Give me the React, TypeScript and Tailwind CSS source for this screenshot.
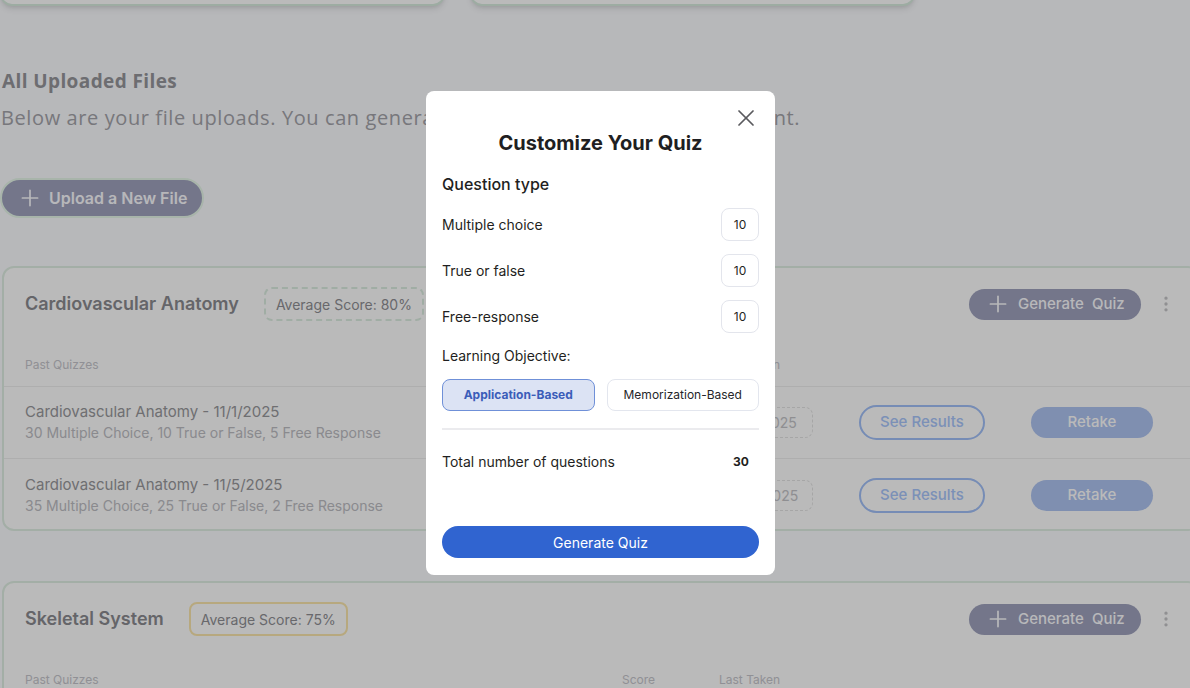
import { Plus, X, EllipsisVertical } from 'lucide-react';

interface PastQuiz {
  name: string;
  detail: string;
  score: string;
  date: string;
}

interface FileCardProps {
  title: string;
  average: string;
  badgeBorder: string;
  quizzes: PastQuiz[];
}

const FileCard = ({ title, average, badgeBorder, quizzes }: FileCardProps) => {
  return (
    <div className="ml-[2px] w-[1198px] rounded-xl border-2 border-[#e0efe4] bg-white">
      <div className="flex items-center pl-[21px] pr-[22px] pt-[19px]">
        <h3 className="text-[18px] font-semibold leading-7 text-[#8b8b90]">{title}</h3>
        <span
          className={`ml-[25px] flex h-[34px] items-center rounded-lg border-2 px-[10px] text-[14px] text-[#8f8f94] ${badgeBorder}`}
        >
          {average}
        </span>
        <button className="ml-auto flex h-[31px] w-[172px] items-center gap-[7px] whitespace-nowrap rounded-full bg-[#9fa2bd] pl-[16px] text-[15px] font-medium text-[#fcfcff]">
          <Plus size={26} strokeWidth={1.6} />
          <span>Generate&nbsp; Quiz</span>
        </button>
        <EllipsisVertical size={20} className="ml-[15px] text-[#c6c6c8]" />
      </div>

      <div className="mt-[36px] flex border-b border-[#efefef] pb-[13px] pl-[21px] text-[12px] leading-4 text-[#c6c6cc]">
        <span className="w-[597px]">Past Quizzes</span>
        <span className="w-[97px]">Score</span>
        <span>Last Taken</span>
      </div>

      {quizzes.map((q, i) => (
        <div
          key={q.name}
          className={`flex items-center pl-[21px] ${i === 0 ? 'h-[72px] border-b border-[#efefef]' : 'h-[70px] pt-[2px]'}`}
        >
          <div className="flex w-[597px] flex-col gap-[1px]">
            <span className="text-[15px] leading-5 text-[#98989c]">{q.name}</span>
            <span className="text-[14px] leading-5 text-[#bdbdc3]">{q.detail}</span>
          </div>
          <span className="w-[97px] text-[14px] text-[#98989c]">{q.score}</span>
          <div className="w-[140px]">
            <span className="flex h-[31px] w-[94px] items-center justify-center rounded-lg border border-dashed border-[#e4e4e4] text-[14px] text-[#c4c4c8]">
              {q.date}
            </span>
          </div>
          <div className="w-[172px]">
            <button className="h-[35px] w-[126px] rounded-full border-2 border-[#a2c0f8] text-[15px] font-medium text-[#a9c6fb]">
              See Results
            </button>
          </div>
          <button className="h-[31px] w-[122px] rounded-full bg-[#aec4f1] text-[15px] font-medium text-white">
            Retake
          </button>
        </div>
      ))}
    </div>
  );
};

const QuizModal = () => {
  const types = ['Multiple choice', 'True or false', 'Free-response'];

  return (
    <div className="absolute left-[426px] top-[91px] h-[484px] w-[349px] rounded-lg bg-white px-4 pt-4 font-['Inter',sans-serif] text-[#1f1f22]">
      <button className="absolute right-[15px] top-[13px] text-[#5a5a5e]">
        <X size={28} strokeWidth={1.5} />
      </button>

      <h2 className="mt-[22px] text-center text-[20px] font-bold leading-7">Customize Your Quiz</h2>
      <p className="mt-[15px] text-[16px] font-medium leading-6">Question type</p>

      <div className="mt-[12px] flex flex-col gap-[13px]">
        {types.map((t) => (
          <div key={t} className="flex items-center justify-between">
            <span className="text-[14px]">{t}</span>
            <span className="flex h-[33px] w-[38px] items-center justify-center rounded-lg border border-[#e3e5ec] text-[12px]">
              10
            </span>
          </div>
        ))}
      </div>

      <p className="mt-[13px] text-[14px] leading-5">Learning Objective:</p>
      <div className="mt-[13px] grid grid-cols-2 gap-3">
        <button className="h-[32px] rounded-lg border border-[#6f90d8] bg-[#dce3f4] text-[12px] font-bold text-[#3b5db9]">
          Application-Based
        </button>
        <button className="h-[32px] rounded-lg border border-[#e3e6ee] text-[12px] text-[#26262a]">
          Memorization-Based
        </button>
      </div>

      <div className="mt-[17px] h-[2px] bg-[#ebebee]" />

      <div className="mt-[22px] flex items-center justify-between text-[14px] leading-5">
        <span>Total number of questions</span>
        <span className="w-[36px] text-center text-[12px] font-bold">30</span>
      </div>

      <button className="mt-[54px] h-[32px] w-full rounded-full bg-[#3064d0] text-[14px] text-white">
        Generate Quiz
      </button>
    </div>
  );
};

const App = () => {
  const cardio: PastQuiz[] = [
    {
      name: 'Cardiovascular Anatomy - 11/1/2025',
      detail: '30 Multiple Choice, 10 True or False, 5 Free Response',
      score: '82%',
      date: '11/1/2025',
    },
    {
      name: 'Cardiovascular Anatomy - 11/5/2025',
      detail: '35 Multiple Choice, 25 True or False, 2 Free Response',
      score: '78%',
      date: '11/5/2025',
    },
  ];

  const skeletal: PastQuiz[] = [
    {
      name: 'Skeletal System - 10/28/2025',
      detail: '20 Multiple Choice, 10 True or False, 5 Free Response',
      score: '75%',
      date: '10/28/2025',
    },
  ];

  return (
    <div className="relative h-[688px] w-[1190px] overflow-hidden bg-[#fbfcff] font-['Inter',sans-serif]">
      <div className="w-[1200px]">
        {/* cards above, scrolled out of view */}
        <div className="-mt-[94px] flex gap-[25px]">
          <div className="h-[100px] w-[445px] rounded-xl border-2 border-[#d8ecdf] bg-white shadow-md" />
          <div className="h-[100px] w-[445px] rounded-xl border-2 border-[#d8ecdf] bg-white shadow-md" />
        </div>

        <h2 className="ml-[2px] mt-[61px] font-['Open_Sans',sans-serif] text-[19px] font-bold leading-7 tracking-[0.4px] text-[#96969b]">
          All Uploaded Files
        </h2>
        <p className="ml-[1px] mt-[9px] whitespace-nowrap font-['Open_Sans',sans-serif] text-[20px] leading-7 tracking-[0.6px] text-[#a4a4aa]">
          Below are your file uploads. You can generate quizzes based on every document.
        </p>

        <button className="mt-[46px] flex h-[40px] w-[204px] items-center gap-[6px] rounded-full border-2 border-[#e6f7ea] bg-[#9fa2bd] pl-[15px] text-[16px] font-semibold text-[#fbfbff]">
          <Plus size={26} strokeWidth={1.6} />
          Upload a New File
        </button>

        <div className="mt-[48px] flex flex-col gap-[50px]">
          <FileCard
            title="Cardiovascular Anatomy"
            average="Average Score: 80%"
            badgeBorder="border-dashed border-[#dcede1]"
            quizzes={cardio}
          />
          <FileCard
            title="Skeletal System"
            average="Average Score: 75%"
            badgeBorder="border-[#fbe7ad]"
            quizzes={skeletal}
          />
        </div>
      </div>

      <div className="absolute inset-0 bg-black/[0.27]" />
      <QuizModal />
    </div>
  );
};

export default App;
